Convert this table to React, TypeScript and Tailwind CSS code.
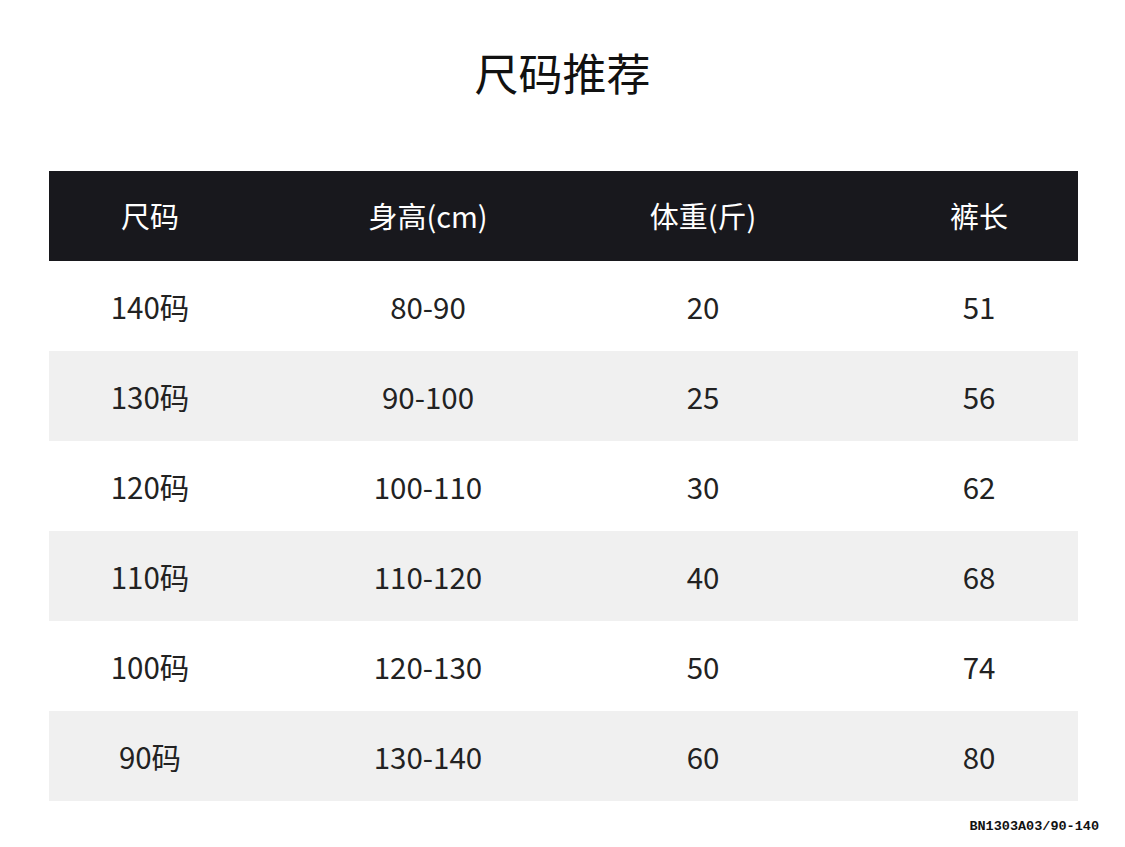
const rows = [
  ['140码', '80-90', '20', '51'],
  ['130码', '90-100', '25', '56'],
  ['120码', '100-110', '30', '62'],
  ['110码', '110-120', '40', '68'],
  ['100码', '120-130', '50', '74'],
  ['90码', '130-140', '60', '80'],
];

const cols = 'grid grid-cols-[202px_354px_196px_1fr] items-center';

export default function App() {
  return (
    <div className="w-[1125px] h-[847px] bg-white font-['Noto_Sans_CJK_SC','Noto_Sans',sans-serif]">
      {/* 标题 */}
      <h1 className="pt-[48px] text-center text-[44px] leading-[48px] font-normal text-[#111]">尺码推荐</h1>

      {/* 尺码表 */}
      <div className="mt-[75px] mx-[49px] w-[1029px]">
        <div className={`${cols} h-[90px] bg-[#18181d] text-white text-[29px]`}>
          <div className="text-center">尺码</div>
          <div className="text-center">身高(cm)</div>
          <div className="text-center">体重(斤)</div>
          <div className="text-center pl-[79px]">裤长</div>
        </div>
        {rows.map((r, i) => (
          <div
            key={r[0]}
            className={`${cols} h-[90px] text-[29.5px] text-[#222] ${i % 2 === 1 ? 'bg-[#f0f0f0]' : 'bg-white'}`}
          >
            <div className="text-center">{r[0]}</div>
            <div className="text-center">{r[1]}</div>
            <div className="text-center">{r[2]}</div>
            <div className="text-center pl-[79px]">{r[3]}</div>
          </div>
        ))}
      </div>

      <div className="mt-[16px] pr-[26px] text-right font-['Liberation_Mono',monospace] font-bold text-[13.5px] text-[#111]">
        BN1303A03/90-140
      </div>
    </div>
  );
}
